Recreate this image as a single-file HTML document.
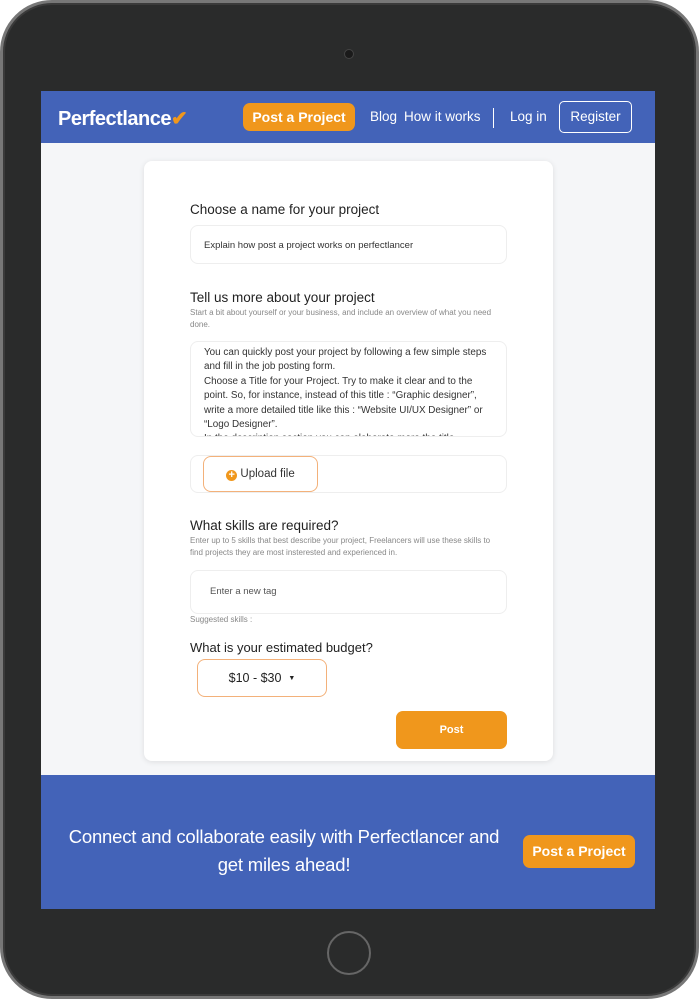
<!DOCTYPE html>
<html><head><meta charset="utf-8"><style>
*{margin:0;padding:0;box-sizing:border-box}
body{width:699px;height:1000px;background:#fff;position:relative;overflow:hidden;font-family:"Liberation Sans",sans-serif}
.tab{position:absolute;left:0;top:0;width:699px;height:999px;border-radius:52px;background:#2a2b2b;border:3px solid #777;box-shadow:inset 0 0 0 2px #3a3a3a}
.cam{position:absolute;left:344px;top:49px;width:10px;height:10px;border-radius:50%;background:#1a1a1a;border:1px solid #444}
.home{position:absolute;left:327px;top:931px;width:44px;height:44px;border-radius:50%;border:2px solid #666}
.scr{position:absolute;left:41px;top:91px;width:614px;height:818px;background:#f5f6f8;overflow:hidden}
.hdr{position:absolute;left:0;top:0;width:614px;height:52px;background:#4363b8;color:#fff}
.logo{position:absolute;left:17px;top:15px;font-weight:bold;font-size:20px;letter-spacing:-0.5px}
.btn{position:absolute;background:#f0971c;color:#fff;font-weight:bold;border-radius:7px;text-align:center}
.nav{position:absolute;top:18px;font-size:13.5px}
.card{position:absolute;left:103px;top:70px;width:409px;height:600px;background:#fff;border-radius:8px;box-shadow:0 1px 6px rgba(0,0,0,.1)}
.lbl{position:absolute;left:46px;font-size:13.5px;color:#222}
.sub{position:absolute;left:46px;font-size:8px;color:#888;line-height:12px;width:310px}
.box{position:absolute;left:46px;width:317px;border:1px solid #eee;border-radius:8px;background:#fff}
.ft{position:absolute;left:0;top:684px;width:614px;height:134px;background:#4363b8;color:#fff}
</style></head><body>
<div class="tab"></div>
<div class="cam"></div>
<div class="home"></div>
<div class="scr">
 <div class="hdr">
  <div class="logo">Perfectlance<span style="color:#f0971c">✔</span></div>
  <div class="btn" style="left:202px;top:12px;width:112px;height:28px;line-height:28px;font-size:14px">Post a Project</div>
  <div class="nav" style="left:329px">Blog</div>
  <div class="nav" style="left:363px">How it works</div>
  <div style="position:absolute;left:452px;top:17px;width:1px;height:20px;background:#fff"></div>
  <div class="nav" style="left:469px">Log in</div>
  <div style="position:absolute;left:518px;top:10px;width:73px;height:32px;border:1.5px solid #fff;border-radius:5px;font-size:13.5px;text-align:center;line-height:29px">Register</div>
 </div>
 <div class="card">
  <div class="lbl" style="top:41px">Choose a name for your project</div>
  <div class="box" style="top:64px;height:39px;font-size:9.5px;color:#333;padding:14px 13px">Explain how post a project works on perfectlancer</div>
  <div class="lbl" style="top:129px">Tell us more about your project</div>
  <div class="sub" style="top:146px">Start a bit about yourself or your business, and include an overview of what you need done.</div>
  <div class="box" style="top:180px;height:96px;font-size:9.9px;color:#333;line-height:14.4px;padding:4px 10px 4px 13px;overflow:hidden">You can quickly post your project by following a few simple steps and fill in the job posting form.<br>Choose a Title for your Project. Try to make it clear and to the point. So, for instance, instead of this title : “Graphic designer”, write a more detailed title like this : “Website UI/UX Designer” or “Logo Designer”.<br>In the description section you can elaborate more the title</div>
  <div class="box" style="top:294px;height:38px"></div>
  <div style="position:absolute;left:59px;top:295px;width:115px;height:36px;border:1px solid #f3b17a;border-radius:8px;font-size:11.5px;color:#333;text-align:center;line-height:34px"><span style="display:inline-block;width:11px;height:11px;border-radius:50%;background:#f0971c;color:#fff;font-size:11px;line-height:11px;font-weight:bold;vertical-align:-1px">+</span> Upload file</div>
  <div class="lbl" style="top:357px">What skills are required?</div>
  <div class="sub" style="top:374px">Enter up to 5 skills that best describe your project, Freelancers will use these skills to find projects they are most insterested and experienced in.</div>
  <div class="box" style="top:409px;height:44px;font-size:9.5px;color:#555;padding:15px 19px">Enter a new tag</div>
  <div class="sub" style="top:453px">Suggested skills :</div>
  <div class="lbl" style="top:479px;font-size:13px">What is your estimated budget?</div>
  <div style="position:absolute;left:53px;top:498px;width:130px;height:38px;border:1px solid #f3b17a;border-radius:8px;font-size:12.5px;color:#222;text-align:center;line-height:36px">$10 - $30 &nbsp;<span style="font-size:7px;vertical-align:2px">▼</span></div>
  <div class="btn" style="left:252px;top:550px;width:111px;height:38px;line-height:38px;font-size:11px">Post</div>
 </div>
 <div class="ft">
  <div style="position:absolute;left:0;top:48px;width:486px;text-align:center;font-size:18.5px;line-height:28px;letter-spacing:-0.2px">Connect and collaborate easily with Perfectlancer and<br>get miles ahead!</div>
  <div class="btn" style="left:482px;top:60px;width:112px;height:33px;line-height:33px;font-size:14px">Post a Project</div>
 </div>
</div>
</body></html>
